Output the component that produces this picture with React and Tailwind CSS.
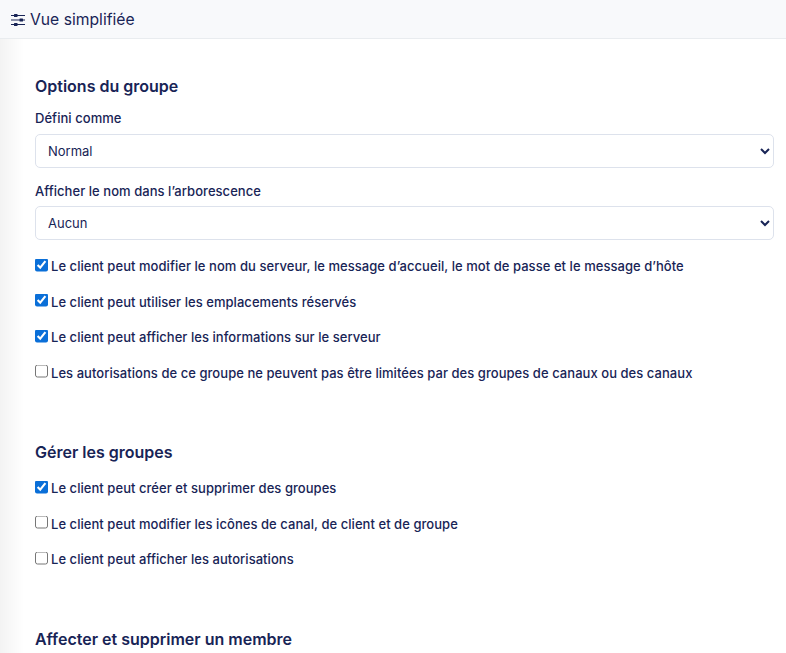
const SlidersIcon = () => (
  <svg width="16" height="14" viewBox="0 0 16 14" className="shrink-0">
    <g fill="none" stroke="#182456" strokeWidth="1.1">
      <path d="M1 2.5h14M1 7h14M1 11.5h14" />
    </g>
    <g fill="#182456">
      <rect x="4" y="1" width="3.5" height="3" rx="0.5" />
      <rect x="9.5" y="5.5" width="3.5" height="3" rx="0.5" />
      <rect x="4" y="10" width="3.5" height="3" rx="0.5" />
    </g>
  </svg>
);

const Check = ({ checked, label }) => (
  <label className="flex items-center text-[13px] tracking-[0.05px] font-medium text-[#182456] leading-[20px] mb-[15.5px]">
    <input type="checkbox" defaultChecked={checked} className="w-[13px] h-[13px] m-0 mr-[3px] -translate-y-[1.5px] accent-[#0a6fd8] appearance-auto" />
    {label}
  </label>
);

const Field = ({ label, value, labelGap }) => (
  <div className="mb-[12.5px]">
    <label className={`block text-[13px] tracking-[0.05px] font-medium text-[#182456] leading-[20px] ${labelGap}`}>{label}</label>
    <select defaultValue={value} className="appearance-auto w-full h-[34px] pl-[8px] pr-[4px] text-[13px] text-[#182456] bg-white border border-[#dde2ec] rounded-[5px]">
      <option>{value}</option>
    </select>
  </div>
);

export default function App() {
  return (
    <div className="h-[653px] overflow-hidden bg-white font-['Inter',sans-serif] text-[#182456]">
      <div className="h-[39px] flex items-center pl-[10px] pt-[1px] gap-[4px] bg-[#f8f9fb] border-b border-[#e9ecef] text-[15.7px]">
        <SlidersIcon />
        <span>Vue simplifiée</span>
      </div>
      <div className="pl-[35px] pr-[12px] pt-[35px] bg-[linear-gradient(to_right,#f3f3f3,#ffffff_24px)] h-full">
        <h2 className="text-[16px] font-semibold leading-[24px] mb-[10px]">Options du groupe</h2>
        <Field label="Défini comme" value="Normal" labelGap="mb-[6px]" />
        <Field label="Afficher le nom dans l’arborescence" value="Aucun" labelGap="mb-[5.5px]" />
        <div className="mt-[16px]">
          <Check checked label="Le client peut modifier le nom du serveur, le message d’accueil, le mot de passe et le message d’hôte" />
          <Check checked label="Le client peut utiliser les emplacements réservés" />
          <Check checked label="Le client peut afficher les informations sur le serveur" />
          <Check label="Les autorisations de ce groupe ne peuvent pas être limitées par des groupes de canaux ou des canaux" />
        </div>
        <h2 className="text-[16px] font-semibold leading-[24px] mt-[57px] mb-[14.5px]">Gérer les groupes</h2>
        <Check checked label="Le client peut créer et supprimer des groupes" />
        <Check label="Le client peut modifier les icônes de canal, de client et de groupe" />
        <Check label="Le client peut afficher les autorisations" />
        <h2 className="text-[16px] font-semibold leading-[24px] mt-[57.5px]">Affecter et supprimer un membre</h2>
      </div>
    </div>
  );
}
